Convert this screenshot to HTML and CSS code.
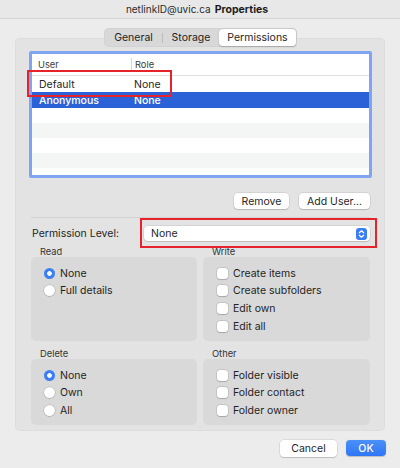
FILE: index.html
```html
<!DOCTYPE html>
<html>
<head>
<meta charset="utf-8">
<title>Properties</title>
<link rel="stylesheet" href="styles.css">
</head>
<body>
<div class="window">
  <div class="titlebar"><span class="acct">netlinkID@uvic.ca</span><span class="title">Properties</span></div>

  <div class="tabs">
    <div class="tab t-general">General</div>
    <div class="tab-sep"></div>
    <div class="tab t-storage">Storage</div>
    <div class="tab t-perm active">Permissions</div>
  </div>

  <div class="panel">
    <div class="table">
      <div class="thead"><div class="c1">User</div><div class="c2">Role</div></div>
      <div class="row h16"><div class="c1">Default</div><div class="c2">None</div></div>
      <div class="row h16 sel"><div class="c1">Anonymous</div><div class="c2">None</div></div>
      <div class="row h15"></div>
      <div class="row h15 alt"></div>
      <div class="row h15"></div>
      <div class="row h15 alt"></div>
    </div>

    <div class="btnrow">
      <button class="btn b-remove">Remove</button>
      <button class="btn b-add">Add User...</button>
    </div>

    <div class="sep"></div>

    <div class="perm">
      <span class="perm-label">Permission Level:</span>
      <div class="popup">
        <span>None</span>
        <svg class="stepper" width="11" height="12" viewBox="0 0 11 12">
          <rect x="0" y="0" width="11" height="12" rx="3" fill="#3a7ef5"/>
          <path d="M3.3 4.8 L5.5 2.8 L7.7 4.8" fill="none" stroke="#fff" stroke-width="1.2" stroke-linecap="round" stroke-linejoin="round"/>
          <path d="M3.3 7.2 L5.5 9.2 L7.7 7.2" fill="none" stroke="#fff" stroke-width="1.2" stroke-linecap="round" stroke-linejoin="round"/>
        </svg>
      </div>
    </div>

    <div class="groups">
      <div class="group">
        <div class="glabel">Read</div>
        <div class="gbox tall">
          <div class="opt"><span class="radio on"></span>None</div>
          <div class="opt"><span class="radio"></span>Full details</div>
        </div>
      </div>
      <div class="group">
        <div class="glabel">Write</div>
        <div class="gbox tall">
          <div class="opt cb"><span class="check"></span>Create items</div>
          <div class="opt cb"><span class="check"></span>Create subfolders</div>
          <div class="opt cb"><span class="check"></span>Edit own</div>
          <div class="opt cb"><span class="check"></span>Edit all</div>
        </div>
      </div>
      <div class="group">
        <div class="glabel">Delete</div>
        <div class="gbox short">
          <div class="opt"><span class="radio on"></span>None</div>
          <div class="opt"><span class="radio"></span>Own</div>
          <div class="opt"><span class="radio"></span>All</div>
        </div>
      </div>
      <div class="group">
        <div class="glabel">Other</div>
        <div class="gbox short">
          <div class="opt cb"><span class="check"></span>Folder visible</div>
          <div class="opt cb"><span class="check"></span>Folder contact</div>
          <div class="opt cb"><span class="check"></span>Folder owner</div>
        </div>
      </div>
    </div>
  </div>

  <div class="footer">
    <button class="btn b-cancel">Cancel</button>
    <button class="btn primary">OK</button>
  </div>

  <div class="mark mark-user"></div>
  <div class="mark mark-level"></div>
</div>
</body>
</html>
```

FILE: styles.css
```css
* { box-sizing: border-box; }

body {
  margin: 0;
  background: #ececec;
  font-family: Inter, "Liberation Sans", Arial, sans-serif;
  font-size: 10.5px;
  color: #1f1f1f;
}

.window {
  position: relative;
  width: 400px;
  height: 468px;
  overflow: hidden;
  background: #ececec;
}

.titlebar {
  height: 19px;
  border-bottom: 1px solid #d3d3d3;
  background: #e8e8e8;
  display: flex;
  justify-content: center;
  align-items: center;
  gap: 4px;
  padding-right: 6px;
}
.acct { font-size: 10px; color: #2b2b2b; }
.title { font-size: 10.5px; font-weight: 700; color: #1c1c1c; }

.tabs {
  position: relative;
  z-index: 1;
  display: flex;
  align-items: center;
  width: 193px;
  height: 19px;
  margin: 9px 0 -9px 104px;
  padding: 1px;
  background: #d8d8d8;
  border-radius: 5px;
  box-shadow: inset 0 0 0 0.5px rgba(0,0,0,0.06);
}
.tab {
  height: 17px;
  display: flex;
  align-items: center;
  justify-content: center;
  font-size: 10.5px;
  color: #1e1e1e;
}
.t-general { width: 57px; }
.t-storage { width: 56px; }
.t-perm { width: 77px; }
.tab.active {
  background: #fff;
  border-radius: 4px;
  box-shadow: 0 0.5px 1.5px rgba(0,0,0,0.22);
}
.tab-sep { width: 1px; height: 10px; background: #bdbdbd; }

.panel {
  margin: 0 15px;
  height: 393px;
  padding: 13px 13px 0 14px;
  background: #e3e3e3;
  border-radius: 5px;
  box-shadow: inset 0 0 0 0.5px rgba(0,0,0,0.05);
}

.table {
  height: 127px;
  border: 3px solid #80a4f2;
  border-radius: 2px;
  background: #fff;
  overflow: hidden;
}
.thead {
  display: flex;
  height: 22px;
  border-bottom: 1px solid #e1e1e1;
  align-items: center;
  font-size: 9.3px;
  color: #3c3c3c;
}
.thead .c2 {
  border-left: 1px solid #d8d8d8;
  height: 14px;
  display: flex;
  align-items: center;
}
.c1 { width: 99px; padding-left: 6px; }
.c2 { padding-left: 3px; }
.row { display: flex; align-items: center; font-size: 10.5px; }
.row .c1 { padding-left: 7px; }
.h16 { height: 16px; }
.h15 { height: 15px; }
.row.alt { background: #f4f5f5; }
.row.sel { background: #2c62d8; color: #fff; font-weight: 500; }

.btnrow {
  display: flex;
  justify-content: flex-end;
  gap: 10px;
  margin-top: 15px;
  padding-right: 2px;
}
.btn {
  height: 16px;
  padding: 0;
  border: none;
  border-radius: 4px;
  background: #fff;
  font-family: inherit;
  font-size: 10.5px;
  color: #1f1f1f;
  box-shadow: 0 0 0 0.5px rgba(0,0,0,0.14), 0 1px 1px rgba(0,0,0,0.14);
}
.b-remove { width: 55px; }
.b-add { width: 71px; }

.sep {
  height: 1px;
  margin: 8px 2px 0 2px;
  background: #d1d1d1;
}

.perm {
  display: flex;
  align-items: center;
  height: 15px;
  margin-top: 8px;
}
.perm-label { padding-left: 3px; font-size: 10.5px; }
.popup {
  margin-left: auto;
  margin-right: 2px;
  width: 226px;
  height: 15px;
  display: flex;
  align-items: center;
  justify-content: space-between;
  padding: 0 3px 0 7px;
  background: #fff;
  border-radius: 4px;
  box-shadow: 0 0 0 0.5px rgba(0,0,0,0.12), 0 1px 1px rgba(0,0,0,0.12);
}
.stepper { display: block; }

.groups {
  display: grid;
  grid-template-columns: 166px 167px;
  column-gap: 6px;
  row-gap: 7px;
  margin: 5px 2px 0 2px;
}
.glabel {
  height: 11px;
  line-height: 11px;
  padding-left: 9px;
  font-size: 9.3px;
  color: #333;
}
.gbox {
  background: #d9d9d9;
  border-radius: 5px;
  padding-top: 7.5px;
}
.gbox.tall { height: 84px; }
.gbox.short { height: 66px; }

.opt {
  display: flex;
  align-items: center;
  gap: 5px;
  height: 17.6px;
  padding-left: 13px;
  font-size: 10.5px;
}
.opt.cb { padding-left: 14px; }

.radio {
  width: 11px;
  height: 11px;
  border-radius: 50%;
  background: #fff;
  box-shadow: 0 0 0 0.5px rgba(0,0,0,0.18), 0 0.5px 1px rgba(0,0,0,0.18);
  flex: none;
}
.radio.on {
  background: radial-gradient(circle, #fff 0 2px, #3a7ff6 2.6px);
  box-shadow: none;
}
.check {
  width: 11px;
  height: 11px;
  border-radius: 3px;
  background: #fff;
  box-shadow: 0 0 0 0.5px rgba(0,0,0,0.16), 0 0.5px 1px rgba(0,0,0,0.16);
  flex: none;
}

.footer {
  display: flex;
  justify-content: flex-end;
  gap: 9px;
  margin-top: 9px;
  padding-right: 14px;
}
.b-cancel { width: 57px; height: 17px; }
.btn.primary {
  width: 40px;
  height: 16px;
  background: linear-gradient(#4b90f8, #2f76f4);
  color: #fff;
  font-weight: 500;
  box-shadow: 0 0.5px 1px rgba(0,0,0,0.2);
}

.mark {
  position: absolute;
  border: 2px solid #e6232b;
}
.mark-user { left: 27px; top: 70px; width: 145px; height: 27px; }
.mark-level { left: 140px; top: 218px; width: 237px; height: 30px; }
```
